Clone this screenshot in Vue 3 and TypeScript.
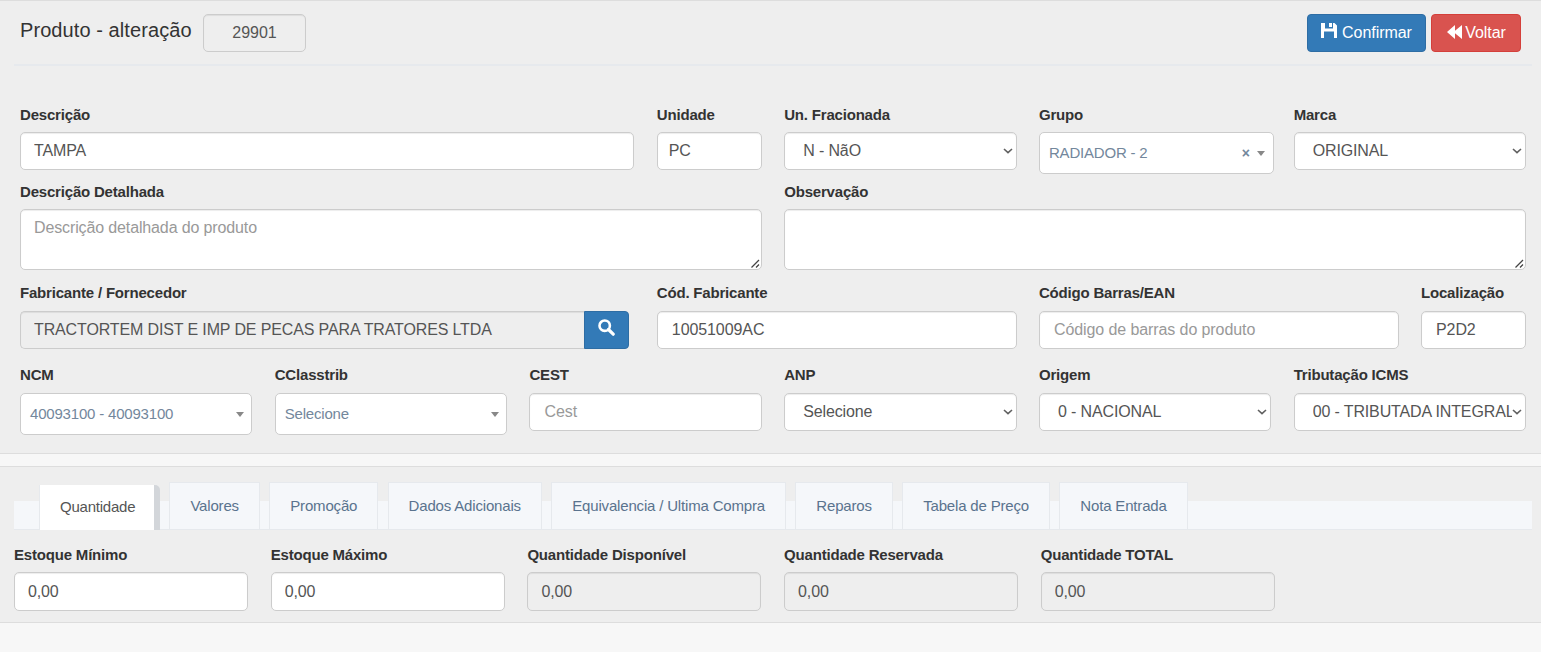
<script setup lang="ts">
import { ref } from 'vue'

interface Field {
  label: string
  kind: 'input' | 'select' | 'combo' | 'area' | 'lookup'
  value?: string
  placeholder?: string
  span: number
  clearable?: boolean
  tight?: boolean
}

const rows: { name: string; fields: Field[] }[] = [
  {
    name: 'main',
    fields: [
      { label: 'Descrição', kind: 'input', value: 'TAMPA', span: 5 },
      { label: 'Unidade', kind: 'input', value: 'PC', span: 1, tight: true },
      { label: 'Un. Fracionada', kind: 'select', value: 'N - NãO', span: 2 },
      { label: 'Grupo', kind: 'combo', value: 'RADIADOR - 2', span: 2, clearable: true },
      { label: 'Marca', kind: 'select', value: 'ORIGINAL', span: 2 },
    ],
  },
  {
    name: 'details',
    fields: [
      { label: 'Descrição Detalhada', kind: 'area', placeholder: 'Descrição detalhada do produto', span: 6 },
      { label: 'Observação', kind: 'area', span: 6 },
    ],
  },
  {
    name: 'supplier',
    fields: [
      { label: 'Fabricante / Fornecedor', kind: 'lookup', value: 'TRACTORTEM DIST E IMP DE PECAS PARA TRATORES LTDA', span: 5 },
      { label: 'Cód. Fabricante', kind: 'input', value: '10051009AC', span: 3 },
      { label: 'Código Barras/EAN', kind: 'input', placeholder: 'Código de barras do produto', span: 3 },
      { label: 'Localização', kind: 'input', value: 'P2D2', span: 1 },
    ],
  },
  {
    name: 'fiscal',
    fields: [
      { label: 'NCM', kind: 'combo', value: '40093100 - 40093100', span: 2 },
      { label: 'CClasstrib', kind: 'combo', value: 'Selecione', span: 2 },
      { label: 'CEST', kind: 'input', placeholder: 'Cest', span: 2 },
      { label: 'ANP', kind: 'select', value: 'Selecione', span: 2 },
      { label: 'Origem', kind: 'select', value: '0 - NACIONAL', span: 2 },
      { label: 'Tributação ICMS', kind: 'select', value: '00 - TRIBUTADA INTEGRAL', span: 2 },
    ],
  },
]

const tabs = [
  'Quantidade', 'Valores', 'Promoção', 'Dados Adicionais',
  'Equivalencia / Ultima Compra', 'Reparos', 'Tabela de Preço', 'Nota Entrada',
]
const activeTab = ref('Quantidade')

const stock = [
  { label: 'Estoque Mínimo', locked: false },
  { label: 'Estoque Máximo', locked: false },
  { label: 'Quantidade Disponível', locked: true },
  { label: 'Quantidade Reservada', locked: true },
  { label: 'Quantidade TOTAL', locked: true },
]
</script>

<template>
  <main class="page">
    <section class="panel product">
      <header class="heading">
        <h1 class="title">Produto - alteração</h1>
        <input class="control code" value="29901" readonly />
        <div class="actions">
          <button class="btn primary">
            <svg class="ico save" viewBox="0 0 16 16"><path fill="#fff" fill-rule="evenodd" d="M0 0H4V5.500H12V0H13.500L16 2.500V15H13V8.500H3V15H0ZM8 0H11V4H8Z" /></svg>
            <span>Confirmar</span>
          </button>
          <button class="btn danger">
            <svg class="ico back" viewBox="0 0 16 14"><path fill="#fff" d="M8 0V5.800L15 0V14L8 8.200V14L0 7Z" /></svg>
            <span>Voltar</span>
          </button>
        </div>
      </header>

      <form class="form" @submit.prevent>
        <div v-for="row in rows" :key="row.name" class="row" :class="row.name">
          <div v-for="f in row.fields" :key="f.label" class="field" :class="'span' + f.span">
            <label class="label">{{ f.label }}</label>
            <input v-if="f.kind === 'input'" class="control" :class="{ tight: f.tight }" :value="f.value" :placeholder="f.placeholder" />
            <div v-else-if="f.kind === 'select'" class="holder">
              <select class="control select"><option>{{ f.value }}</option></select>
              <svg class="chevron" viewBox="0 0 10 6"><path d="M1 1L5 4.600L9 1" fill="none" stroke="#606060" stroke-width="1.600" /></svg>
            </div>
            <div v-else-if="f.kind === 'area'" class="holder">
              <textarea class="control area" :placeholder="f.placeholder"></textarea>
              <svg class="grip" viewBox="0 0 9 9"><path d="M0.500 8.500L8 1M5 8.500L8 5.500" fill="none" stroke="#444" stroke-width="1.300" /></svg>
            </div>
            <div v-else-if="f.kind === 'lookup'" class="lookup">
              <input class="control" :value="f.value" readonly />
              <button class="btn primary search" aria-label="Pesquisar">
                <svg class="ico" viewBox="0 0 17 17"><circle cx="6.700" cy="6.700" r="5.200" fill="none" stroke="#fff" stroke-width="2.600" /><path d="M10.500 10.500L15.200 15.200" stroke="#fff" stroke-width="3.200" stroke-linecap="round" /></svg>
              </button>
            </div>
            <div v-else class="combo" :class="{ wide: f.clearable }">
              <span class="combo-text">{{ f.value }}</span>
              <span v-if="f.clearable" class="clear">×</span>
              <i class="caret"></i>
            </div>
          </div>
        </div>
      </form>
    </section>

    <section class="panel stock">
      <nav class="tabs">
        <a v-for="t in tabs" :key="t" class="tab" :class="{ active: t === activeTab }" @click="activeTab = t">{{ t }}</a>
      </nav>
      <div class="quantities">
        <div v-for="s in stock" :key="s.label" class="field">
          <label class="label">{{ s.label }}</label>
          <input class="control" value="0,00" :readonly="s.locked" />
        </div>
      </div>
    </section>
  </main>
</template>

<style>
body {
  background: #f7f7f7;
}
</style>

<style scoped>
.page,
.page * {
  box-sizing: border-box;
}
.page {
  font-family: "Liberation Sans", Arial, sans-serif;
  display: flex;
  flex-direction: column;
  gap: 12px;
  color: #333;
}
.panel {
  background: #eee;
  border-top: 1px solid #ddd;
  border-bottom: 1px solid #ddd;
}
.product {
  height: 454px;
}
.stock {
  height: 157px;
  padding: 34px 9px 0 14px;
}
.heading {
  display: flex;
  align-items: flex-start;
  margin: 0 9px 0 14px;
  height: 65px;
  padding: 13px 11px 0 6px;
  border-bottom: 2px solid #e6e9ed;
}
.title {
  margin: 3px 12px 0 0;
  width: 171px;
  font-size: 20px;
  font-weight: 400;
  letter-spacing: 0.080px;
  line-height: 26px;
  white-space: nowrap;
}
.control {
  display: block;
  width: 100%;
  height: 38px;
  margin: 0;
  padding: 6px 14px 6px 13px;
  border: 1px solid #ccc;
  border-radius: 5px;
  background-color: #fff;
  box-shadow: inset 0 1px 1px rgba(0, 0, 0, 0.075);
  font-family: inherit;
  font-size: 16px;
  letter-spacing: -0.130px;
  line-height: 24px;
  color: #555;
  outline: 0;
}
.control::placeholder {
  color: #999;
  opacity: 1;
}
.control[readonly] {
  background-color: #eee;
}
.control.tight {
  padding-left: 11px;
}
.control.code {
  width: 103px;
  text-align: center;
  padding: 6px 12px;
  letter-spacing: 0;
}
.supplier .field > .control,
.fiscal .field > .control {
  padding-left: 14px;
  letter-spacing: -0.090px;
}
.holder {
  position: relative;
}
.select {
  appearance: none;
  padding: 6px 13px 6px 18px;
}
.fiscal .select {
  line-height: 24px;
}
.chevron {
  position: absolute;
  right: 4px;
  top: 16px;
  width: 10px;
  height: 6px;
  pointer-events: none;
}
.area {
  height: 61px;
  padding-top: 6px;
  resize: none;
}
.grip {
  position: absolute;
  right: 2px;
  bottom: 2px;
  width: 9px;
  height: 9px;
  pointer-events: none;
}
.actions {
  display: flex;
  gap: 5px;
  margin-left: auto;
}
.btn {
  display: flex;
  align-items: center;
  justify-content: center;
  height: 38px;
  margin: 0;
  padding: 0 0 1px;
  border: 1px solid;
  border-radius: 4px;
  font: 16px/22px "Liberation Sans", Arial, sans-serif;
  letter-spacing: -0.050px;
  color: #fff;
}
.primary {
  width: 119px;
  gap: 5px;
  background: #337ab7;
  border-color: #2e6da4;
}
.danger {
  width: 90px;
  gap: 3px;
  background: #d9534f;
  border-color: #d43f3a;
}
.ico {
  width: 17px;
  height: 17px;
}
.save {
  width: 16px;
  height: 16px;
  margin-top: -3px;
}
.back {
  width: 16px;
  height: 14px;
  margin: -2px -1px 0 1px;
}
.search {
  width: 45px;
  flex: none;
  padding-bottom: 5px;
  border-radius: 0 4px 4px 0;
}
.form {
  padding: 39px 15px 0 20px;
}
.row {
  display: grid;
  grid-template-columns: repeat(12, minmax(0, 1fr));
  column-gap: 22.400px;
}
.main { height: 77px; }
.details { height: 102px; }
.supplier { height: 82px; }
.span1 { grid-column: span 1; }
.span2 { grid-column: span 2; }
.span3 { grid-column: span 3; }
.span5 { grid-column: span 5; }
.span6 { grid-column: span 6; }
.label {
  display: block;
  height: 27px;
  font-size: 15px;
  font-weight: 700;
  letter-spacing: -0.190px;
  line-height: 20px;
  white-space: nowrap;
}
.supplier .label,
.fiscal .label {
  margin-top: -1px;
  height: 28px;
}
.lookup {
  display: flex;
  margin-right: 5px;
}
.lookup .control {
  flex: 1;
  min-width: 0;
  border-right: 0;
  border-radius: 5px 0 0 5px;
}
.combo {
  display: flex;
  align-items: center;
  height: 42px;
  padding: 0 7px 0 9px;
  border: 1px solid #ccc;
  border-radius: 5px;
  background: #fff;
  font-size: 15px;
  letter-spacing: -0.190px;
  color: #73879c;
}
.combo.wide {
  margin-right: -2.500px;
  padding-right: 8px;
}
.combo-text {
  flex: 1;
  margin-top: -2px;
}
.clear {
  margin-right: 7px;
  font-size: 14px;
  font-weight: 700;
}
.caret {
  border: 4px solid transparent;
  border-top: 5px solid #888;
  border-bottom: 0;
}
.tabs {
  display: flex;
  align-items: flex-end;
  height: 29px;
  padding-left: 25px;
  background: #f5f7fa;
  border-bottom: 1px solid #e6e9ed;
}
.tab {
  flex: none;
  height: 47px;
  margin-right: 9.300px;
  padding: 0 20px;
  border: 1px solid #e6e9ed;
  border-width: 1px 1px 0;
  background: #f5f7fa;
  font-size: 15px;
  letter-spacing: -0.170px;
  line-height: 46px;
  color: #5a738e;
  white-space: nowrap;
  cursor: pointer;
}
.tab.active {
  height: 45px;
  margin-bottom: -1px;
  margin-right: 9px;
  padding-right: 19px;
  border-width: 0 6px 0 1px;
  border-right-color: #d3d6da;
  border-top-right-radius: 5px;
  background: #fff;
  line-height: 44px;
  letter-spacing: -0.220px;
  color: #555;
}
.quantities {
  display: grid;
  grid-template-columns: repeat(5, 234px);
  column-gap: 22.700px;
  padding-top: 15px;
}
.quantities .control {
  height: 39px;
}
</style>
